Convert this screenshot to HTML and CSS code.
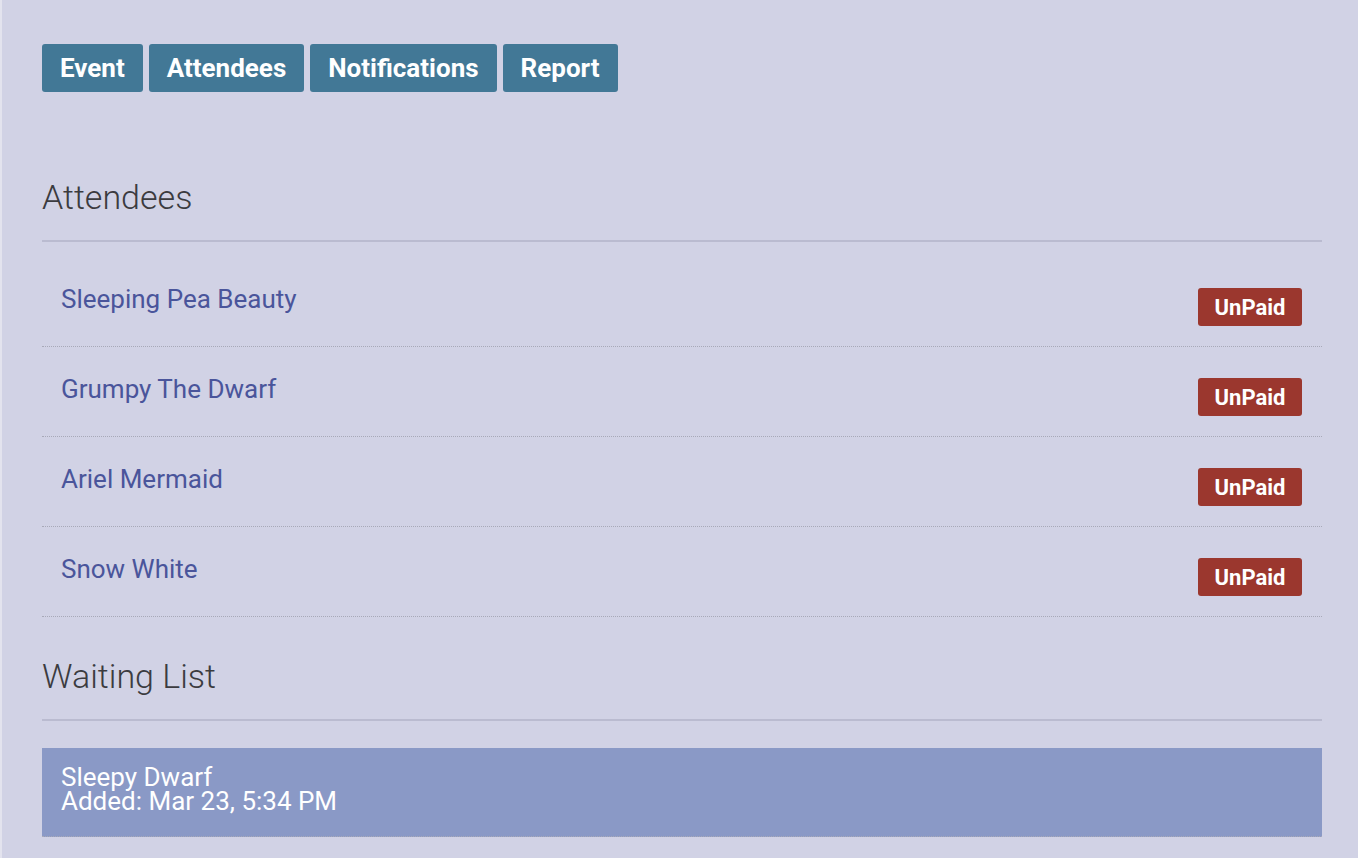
FILE: index.html
```
<!DOCTYPE html>
<html>
<head>
<meta charset="utf-8">
<link rel="stylesheet" href="styles.css">
</head>
<body>
<div class="page">
  <div class="container">
    <nav class="tabs">
      <a class="tab">Event</a>
      <a class="tab">Attendees</a>
      <a class="tab">Notifications</a>
      <a class="tab">Report</a>
    </nav>
    <h2 class="section-title first">Attendees</h2>
    <ul class="list">
      <li class="row"><a class="name">Sleeping Pea Beauty</a><span class="badge">UnPaid</span></li>
      <li class="row"><a class="name">Grumpy The Dwarf</a><span class="badge">UnPaid</span></li>
      <li class="row"><a class="name">Ariel Mermaid</a><span class="badge">UnPaid</span></li>
      <li class="row"><a class="name">Snow White</a><span class="badge">UnPaid</span></li>
    </ul>
    <h2 class="section-title">Waiting List</h2>
    <div class="waiting">
      <div class="wait-item">Sleepy Dwarf<br>Added: Mar 23, 5:34 PM</div>
    </div>
  </div>
</div>
</body>
</html>
```
FILE: styles.css
```
html, body {
  margin: 0;
  padding: 0;
  background: #d1d2e5;
  font-family: Roboto, "Noto Sans", sans-serif;
}
.page {
  border-left: 2px solid #e3e3ee;
  min-height: 858px;
  box-sizing: border-box;
  padding: 44px 36px 0 40px;
}
.container {
  width: 1280px;
}
.tabs {
  display: flex;
  gap: 6px;
}
.tab {
  display: flex;
  align-items: center;
  height: 48px;
  padding: 0 18px;
  background: #427896;
  color: #fff;
  font-weight: 700;
  font-size: 26px;
  border-radius: 3px;
}
.section-title {
  margin: 41px 0 0;
  font-weight: 300;
  font-size: 34px;
  line-height: 36px;
  color: #3b3b3f;
  padding-bottom: 25px;
  border-bottom: 2px solid #babbd0;
}
.section-title.first {
  margin-top: 87px;
}
.list {
  list-style: none;
  margin: 15px 0 0;
  padding: 0;
}
.row {
  display: flex;
  justify-content: space-between;
  align-items: flex-start;
  height: 89px;
  padding: 0 20px 0 19px;
  border-bottom: 1px dotted #a8a9b8;
}
.name {
  margin-top: 27px;
  font-size: 26px;
  line-height: 30px;
  color: #4a559b;
}
.badge {
  margin-top: 31px;
  height: 38px;
  display: flex;
  align-items: center;
  padding: 0 16.5px;
  box-sizing: border-box;
  background: #9b372e;
  color: #fff;
  font-weight: 700;
  font-size: 22px;
  border-radius: 3px;
}
.waiting {
  margin-top: 27px;
}
.wait-item {
  background: #8a99c6;
  color: #fff;
  font-size: 26px;
  line-height: 24px;
  padding: 17px 19px 23px;
  border-bottom: 1px dotted #a8a9b8;
}
```
